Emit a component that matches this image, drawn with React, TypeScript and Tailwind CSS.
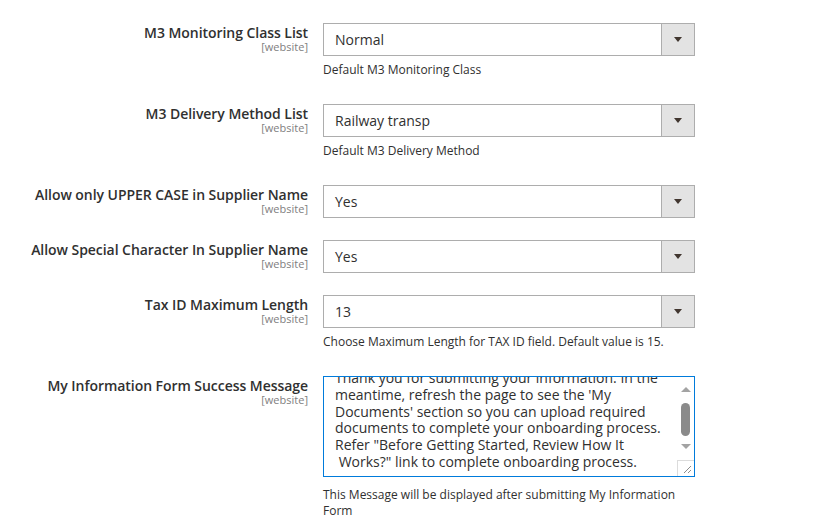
const FONT = { fontFamily: '"Open Sans", "Noto Sans", sans-serif' }

type Row = { label: string; value: string; note?: string }

const ROWS: Row[] = [
  { label: 'M3 Monitoring Class List', value: 'Normal', note: 'Default M3 Monitoring Class' },
  { label: 'M3 Delivery Method List', value: 'Railway transp', note: 'Default M3 Delivery Method' },
  { label: 'Allow only UPPER CASE in Supplier Name', value: 'Yes' },
  { label: 'Allow Special Character In Supplier Name', value: 'Yes' },
  {
    label: 'Tax ID Maximum Length',
    value: '13',
    note: 'Choose Maximum Length for TAX ID field. Default value is 15.',
  },
]

const MESSAGE_LINES = [
  'Thank you for submitting your information. In the',
  "meantime, refresh the page to see the 'My",
  "Documents' section so you can upload required",
  'documents to complete your onboarding process.',
  'Refer "Before Getting Started, Review How It',
  '\u00a0Works?" link to complete onboarding process.',
]

function Label({ text }: { text: string }) {
  return (
    <div className="w-[308px] shrink-0 text-right pt-[1px]">
      <div className="text-[14px] leading-[17px] font-semibold tracking-[-0.05px] text-[#303030]">{text}</div>
      <div className="text-[11px] leading-[12px] text-[#808080]">[website]</div>
    </div>
  )
}

function Select({ value }: { value: string }) {
  return (
    <div className="flex h-[33px] w-[372px] border border-[#adadad] bg-white">
      <div className="flex-1 flex items-center pl-[11px] text-[14px] text-[#303030]">{value}</div>
      <div className="w-[33px] border-l border-[#adadad] bg-[#e3e3e3] flex items-center justify-center">
        <div className="w-0 h-0 border-l-[4px] border-r-[4px] border-t-[5px] border-l-transparent border-r-transparent border-t-[#41362f]" />
      </div>
    </div>
  )
}

function Textarea() {
  return (
    <div className="relative h-[101px] w-[372px] border border-[#007bdb] bg-white overflow-hidden">
      <div className="pl-[11px] -mt-[7px] text-[14px] leading-[16.8px] text-[#303030] whitespace-pre">
        {MESSAGE_LINES.map((l) => (
          <div key={l}>{l}</div>
        ))}
      </div>
      {/* scrollbar */}
      <div className="absolute right-0 top-0 bottom-0 w-[17px] bg-white flex flex-col items-center">
        <div className="h-[17px] w-full flex items-center justify-center mt-[4px]">
          <div className="w-0 h-0 border-l-[5px] border-r-[5px] border-b-[5px] border-l-transparent border-r-transparent border-b-[#a3a3a3]" />
        </div>
        <div className="mt-[5px] w-[9px] h-[33px] rounded-full bg-[#8a8a8a]" />
        <div className="h-[17px] w-full flex items-center justify-center mt-[2px]">
          <div className="w-0 h-0 border-l-[5px] border-r-[5px] border-t-[5px] border-l-transparent border-r-transparent border-t-[#a3a3a3]" />
        </div>
        <div className="mt-auto h-[16px] w-[17px] border-l border-t border-[#dcdcdc] bg-white flex items-end justify-end p-[2px]">
          <svg width="9" height="9" viewBox="0 0 9 9">
            <path d="M8 1 L1 8 M8 5 L5 8" stroke="#8c8c8c" strokeWidth="1" />
          </svg>
        </div>
      </div>
    </div>
  )
}

export default function App() {
  return (
    <div className="min-h-screen bg-white pt-[23px]" style={FONT}>
      <div className="flex flex-col gap-[22px]">
        {ROWS.map((r) => (
          <div key={r.label} className="flex gap-[15px]">
            <Label text={r.label} />
            <div>
              <Select value={r.value} />
              {r.note && (
                <div className="mt-[5px] mb-[4px] text-[12px] leading-[17px] text-[#303030]">{r.note}</div>
              )}
            </div>
          </div>
        ))}
        <div className="flex gap-[15px]">
          <Label text="My Information Form Success Message" />
          <div>
            <Textarea />
            <div className="mt-[10px] w-[372px] text-[12px] leading-[16px] text-[#303030]">
              This Message will be displayed after submitting My Information
              <br />
              Form
            </div>
          </div>
        </div>
      </div>
    </div>
  )
}
